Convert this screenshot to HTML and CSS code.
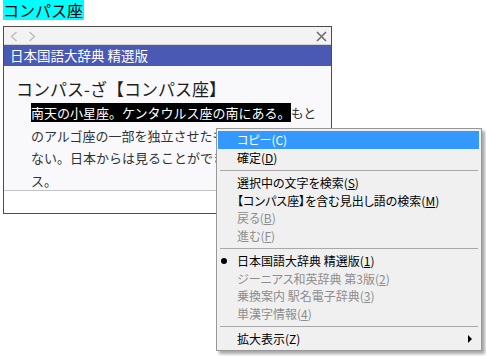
FILE: index.html
```html
<!DOCTYPE html>
<html lang="ja">
<head>
<meta charset="utf-8">
<title>コンパス座</title>
<link rel="stylesheet" href="styles.css">
</head>
<body>
<div class="page">
  <div class="label">コンパス座</div>
  <div class="window">
    <div class="nav">
      <div class="arrows">
        <svg width="8" height="11" viewBox="0 0 8 11"><path d="M6.5 1 L1.5 5.5 L6.5 10" fill="none" stroke="#bdbdbd" stroke-width="1.4"/></svg>
        <svg width="8" height="11" viewBox="0 0 8 11"><path d="M1.5 1 L6.5 5.5 L1.5 10" fill="none" stroke="#bdbdbd" stroke-width="1.4"/></svg>
      </div>
      <svg class="close" width="11" height="11" viewBox="0 0 11 11"><path d="M1 1 L10 10 M10 1 L1 10" fill="none" stroke="#6e6e6e" stroke-width="1.6"/></svg>
    </div>
    <div class="titlebar">日本国語大辞典 精選版</div>
    <div class="content">
      <div class="heading">コンパス-ざ【コンパス座】</div>
      <p class="body"><span class="sel">南天の小星座。ケンタウルス座の南にある。</span>もとのアルゴ座の一部を独立させたもの。明るい星はない。日本からは見ることができる。学名ピクシス。</p>
    </div>
    <div class="footer"></div>
  </div>
</div>

<div class="menu">
  <div class="item active"><span class="mk"></span><span class="tx">コピー(C)</span></div>
  <div class="item"><span class="mk"></span><span class="tx">確定(<u>D</u>)</span></div>
  <div class="sep"></div>
  <div class="item"><span class="mk"></span><span class="tx">選択中の文字を検索(<u>S</u>)</span></div>
  <div class="item"><span class="mk"></span><span class="tx">【コンパス座】を含む見出し語の検索(<u>M</u>)</span></div>
  <div class="item off"><span class="mk"></span><span class="tx">戻る(<u>B</u>)</span></div>
  <div class="item off"><span class="mk"></span><span class="tx">進む(<u>F</u>)</span></div>
  <div class="sep"></div>
  <div class="item"><span class="mk"><span class="dot"></span></span><span class="tx">日本国語大辞典 精選版(<u>1</u>)</span></div>
  <div class="item off"><span class="mk"></span><span class="tx">ジーニアス和英辞典 第3版(<u>2</u>)</span></div>
  <div class="item off"><span class="mk"></span><span class="tx">乗換案内 駅名電子辞典(<u>3</u>)</span></div>
  <div class="item off"><span class="mk"></span><span class="tx">単漢字情報(<u>4</u>)</span></div>
  <div class="sep"></div>
  <div class="item"><span class="mk"></span><span class="tx">拡大表示(Z)</span><span class="sub"></span></div>
</div>
</body>
</html>
```

FILE: styles.css
```css
html, body {
  margin: 0;
  padding: 0;
  background: #ffffff;
}
body {
  font-family: "Noto Sans CJK JP", "Noto Sans", sans-serif;
  color: #000;
}
.page {
  padding-left: 3px;
}
.label {
  display: inline-block;
  background: #00ffff;
  font-size: 16px;
  line-height: 20px;
  height: 20px;
  padding-right: 1px;
  vertical-align: top;
}
.window {
  margin-top: 2px;
  width: 329px;
  height: 188px;
  box-sizing: border-box;
  border: 1px solid #4c4c4c;
  display: flex;
  flex-direction: column;
}
.nav {
  height: 17px;
  border-bottom: 1px solid #d4d4d4;
  background: #f3f3f3;
  display: flex;
  align-items: center;
  justify-content: space-between;
  padding: 0 4px 0 6px;
}
.arrows {
  display: flex;
  gap: 10px;
  padding-top: 1px;
}
.arrows svg, .close {
  display: block;
}
.close {
  margin-top: 1px;
}
.titlebar {
  height: 21px;
  line-height: 21px;
  background: #4a5ab4;
  color: #ffffff;
  font-size: 13.5px;
  padding-left: 6px;
  white-space: nowrap;
}
.content {
  height: 125px;
  overflow: hidden;
  background: #f9f9fc;
  padding: 12px 0 0 12px;
  box-sizing: border-box;
  border-bottom: 1px solid #c4c4c4;
  flex: none;
}
.heading {
  font-size: 17px;
  line-height: 22px;
  color: #1e1e1e;
  white-space: nowrap;
}
.body {
  margin: 2px 0 0 15px;
  width: 286px;
  font-size: 13px;
  line-height: 22.7px;
  color: #333333;
  word-break: break-all;
}
.sel {
  background: #000000;
  color: #ffffff;
}
.footer {
  flex: 1;
  background: #ffffff;
}

.menu {
  position: absolute;
  left: 216px;
  top: 128px;
  width: 266px;
  box-sizing: border-box;
  background: #f0f0f0;
  border: 1px solid #979797;
  padding: 2px 2px 2px 1px;
  box-shadow: 3px 3px 3px rgba(0, 0, 0, 0.35);
  font-size: 12px;
  font-feature-settings: "palt";
}
.item {
  height: 17.5px;
  line-height: 17.5px;
  display: flex;
  align-items: center;
  white-space: nowrap;
  color: #000000;
}
.item.active {
  background: #3399ff;
  color: #ffffff;
}
.item.off {
  color: #8d8d8d;
}
.mk {
  width: 19px;
  flex: none;
  display: flex;
  align-items: center;
}
.dot {
  width: 6px;
  height: 6px;
  border-radius: 50%;
  background: #000;
  margin-left: 3px;
}
.tx {
  flex: 1;
}
.tx u {
  text-underline-offset: 1px;
}
.sub {
  width: 0;
  height: 0;
  border-top: 4px solid transparent;
  border-bottom: 4px solid transparent;
  border-left: 4px solid #000;
  margin-right: 7px;
}
.sep {
  height: 1px;
  background: #a8a8a8;
  margin: 3.5px 1px 3.5px 2px;
}
```
